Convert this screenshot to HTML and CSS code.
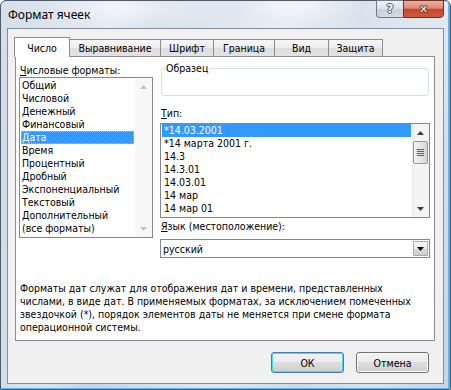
FILE: index.html
```html
<!DOCTYPE html>
<html lang="ru">
<head>
<meta charset="utf-8">
<title>Формат ячеек</title>
<link rel="stylesheet" href="styles.css">
</head>
<body>
<div class="window">
  <div class="titlebar">
    <span class="title">Формат ячеек</span>
    <div class="caption-btns">
      <div class="cbtn help">?</div>
      <div class="cbtn close">✕</div>
    </div>
  </div>
  <div class="client">
    <div class="tabs">
      <div class="tab active w-chislo">Число</div>
      <div class="tab w-vyr">Выравнивание</div>
      <div class="tab w-shrift">Шрифт</div>
      <div class="tab w-gran">Граница</div>
      <div class="tab w-vid">Вид</div>
      <div class="tab w-zash">Защита</div>
    </div>
    <div class="panel">
      <div class="top">
        <div class="leftcol">
          <div class="label"><u>Ч</u>исловые форматы:</div>
          <div class="listbox formats">
            <div class="items">
              <div class="item">Общий</div>
              <div class="item">Числовой</div>
              <div class="item">Денежный</div>
              <div class="item">Финансовый</div>
              <div class="item selected focused">Дата</div>
              <div class="item">Время</div>
              <div class="item">Процентный</div>
              <div class="item">Дробный</div>
              <div class="item">Экспоненциальный</div>
              <div class="item">Текстовый</div>
              <div class="item">Дополнительный</div>
              <div class="item">(все форматы)</div>
            </div>
            <div class="vscroll disabled">
              <div class="sbtn"><svg width="7" height="4" viewBox="0 0 7 4"><path d="M0 4 L3.5 0 L7 4 Z" fill="#c2c2c2"/></svg></div>
              <div class="track"></div>
              <div class="sbtn"><svg width="7" height="4" viewBox="0 0 7 4"><path d="M0 0 L7 0 L3.5 4 Z" fill="#c2c2c2"/></svg></div>
            </div>
          </div>
        </div>
        <div class="rightcol">
          <div class="group"><span class="group-label">Образец</span></div>
          <div class="label type-label"><u>Т</u>ип:</div>
          <div class="listbox types">
            <div class="items">
              <div class="item selected">*14.03.2001</div>
              <div class="item">*14 марта 2001 г.</div>
              <div class="item">14.3</div>
              <div class="item">14.3.01</div>
              <div class="item">14.03.01</div>
              <div class="item">14 мар</div>
              <div class="item">14 мар 01</div>
            </div>
            <div class="vscroll">
              <div class="sbtn"><svg width="7" height="4" viewBox="0 0 7 4"><path d="M0 4 L3.5 0 L7 4 Z" fill="#3c3c3c"/></svg></div>
              <div class="track"><div class="thumb"><span></span><span></span><span></span><span></span></div></div>
              <div class="sbtn"><svg width="7" height="4" viewBox="0 0 7 4"><path d="M0 0 L7 0 L3.5 4 Z" fill="#3c3c3c"/></svg></div>
            </div>
          </div>
          <div class="label lang-label"><u>Я</u>зык (местоположение):</div>
          <div class="combo">
            <span class="combo-text">русский</span>
            <div class="combo-btn"><svg width="7" height="4" viewBox="0 0 7 4"><path d="M0 0 L7 0 L3.5 4 Z" fill="#000"/></svg></div>
          </div>
        </div>
      </div>
      <p class="desc">Форматы дат служат для отображения дат и времени, представленных<br>числами, в виде дат. В применяемых форматах, за исключением помеченных<br>звездочкой (*), порядок элементов даты не меняется при смене формата<br>операционной системы.</p>
    </div>
    <div class="buttons">
      <div class="btn default">ОК</div>
      <div class="btn">Отмена</div>
    </div>
  </div>
</div>
</body>
</html>
```

FILE: styles.css
```css
* { box-sizing: border-box; }
html, body { margin: 0; padding: 0; background: #ffffff; }
body { width: 451px; height: 390px; overflow: hidden; }

.window {
  width: 451px;
  height: 390px;
  border: 1px solid #4d5b69;
  border-radius: 6px 6px 1px 1px;
  background:
    radial-gradient(ellipse 90px 22px at 130px 8px, rgba(255,255,255,0.55), rgba(255,255,255,0)),
    radial-gradient(ellipse 60px 18px at 300px 6px, rgba(255,255,255,0.45), rgba(255,255,255,0)),
    linear-gradient(100deg, rgba(255,255,255,0) 0%, rgba(255,255,255,0.35) 22%, rgba(255,255,255,0) 30%, rgba(255,255,255,0.45) 55%, rgba(255,255,255,0.1) 70%, rgba(255,255,255,0.3) 85%, rgba(255,255,255,0) 100%),
    linear-gradient(180deg, #d6e0ea 0%, #cbd8e6 40%, #c4d5e7 100%);
  box-shadow: inset -3px -2px 0 -1px #5fb4ee;
  font-family: "DejaVu Sans Condensed", "DejaVu Sans", sans-serif;
  font-size: 10.5px;
  color: #000;
}

.titlebar {
  height: 27px;
  display: flex;
  align-items: flex-start;
  padding-left: 7px;
}
.title {
  font-family: "Noto Sans", sans-serif;
  font-size: 12px;
  line-height: 16px;
  margin-top: 6px;
  color: #000;
}
.caption-btns {
  margin-left: auto;
  margin-right: 6px;
  margin-top: -1px;
  display: flex;
}
.cbtn {
  height: 18px;
  display: flex;
  align-items: center;
  justify-content: center;
  font-family: "DejaVu Sans", sans-serif;
  font-weight: bold;
  color: #fff;
}
.help {
  width: 27px;
  border: 1px solid #6e7c8b;
  border-right: none;
  border-radius: 0 0 0 4px;
  background: linear-gradient(180deg, #eef2f6 0%, #dbe3eb 48%, #c5d1dd 52%, #d2dce6 100%);
  font-size: 12px;
  color: #f4f6f8;
  text-shadow: 0 0 1px #3b4652, 1px 0 0 #5a6672, -1px 0 0 #5a6672, 0 1px 0 #5a6672, 0 -1px 0 #5a6672;
}
.close {
  width: 41px;
  border: 1px solid #6b3128;
  border-radius: 0 0 4px 0;
  background: linear-gradient(180deg, #eab0a2 0%, #dc8a75 45%, #c7462c 52%, #d2583c 100%);
  font-size: 11px;
  text-shadow: 0 0 1px #4a1c14, 1px 0 0 #6b3128, -1px 0 0 #6b3128, 0 1px 0 #6b3128, 0 -1px 0 #6b3128;
}

.client {
  margin-left: 6px;
  width: 437px;
  height: 356px;
  border: 1px solid #848e9a;
  background: #f0f0f0;
  display: flex;
  flex-direction: column;
}

.tabs {
  display: flex;
  align-items: flex-end;
  height: 20px;
  margin: 8px 0 -1px 6px;
  position: relative;
  z-index: 1;
}
.tab {
  height: 18px;
  border: 1px solid #898c95;
  margin-left: -1px;
  background: linear-gradient(180deg, #f7f7f7 0%, #ececec 50%, #dedede 51%, #e3e3e3 100%);
  text-align: center;
  line-height: 17px;
  white-space: nowrap;
}
.tab.active {
  height: 20px;
  margin-left: 0;
  border-bottom: none;
  background: #ffffff;
  position: relative;
  z-index: 2;
  line-height: 21px;
}
.w-chislo { width: 56px; }
.w-vyr { width: 92px; }
.w-shrift { width: 54px; }
.w-gran { width: 62px; }
.w-vid { width: 55px; }
.w-zash { width: 55px; }

.panel {
  margin-left: 7px;
  width: 420px;
  height: 285px;
  border: 1px solid #898c95;
  background: #ffffff;
  padding: 7px 0 0 3px;
}

.top { display: flex; gap: 7px; }
.leftcol { width: 134px; }
.rightcol { width: 270px; }

.label {
  height: 13px;
  line-height: 13px;
  padding-left: 1px;
  white-space: nowrap;
}
.label u { text-decoration: underline; text-underline-offset: 1px; }

.listbox {
  border: 1px solid #828790;
  background: #fff;
  display: flex;
}
.formats { height: 161px; }
.types { height: 95px; margin-top: 3px; }
.items { flex: 1; padding: 1px 1px 0 1px; }
.types .items { padding: 0 1px 0 1px; }
.item {
  height: 13px;
  line-height: 13px;
  padding-left: 1px;
  white-space: nowrap;
}
.types .item { padding-left: 2px; }
.item.selected { background: #3399ff; color: #fff; }
.item.focused { outline: 1px dotted #f6b25c; outline-offset: -1px; }

.vscroll {
  width: 17px;
  display: flex;
  flex-direction: column;
  background: linear-gradient(90deg, #e9e9e9 0%, #f5f5f5 20%, #f3f3f3 100%);
}
.vscroll.disabled { background: #f7f7f7; }
.sbtn {
  height: 17px;
  display: flex;
  align-items: center;
  justify-content: center;
}
.track { flex: 1; padding: 0 1px; }
.thumb {
  height: 23px;
  border: 1px solid #979797;
  border-radius: 2px;
  background: linear-gradient(90deg, #f2f2f2 0%, #e6e6e6 50%, #d6d6d6 100%);
  display: flex;
  flex-direction: column;
  align-items: center;
  justify-content: center;
  gap: 1px;
}
.thumb span { display: block; width: 7px; height: 1px; background: #5e5e5e; }

.group {
  position: relative;
  height: 28px;
  margin: 4px 1px 0 1px;
  border: 1px solid #d5dfe5;
  border-radius: 3px;
}
.group-label {
  position: absolute;
  top: -7px;
  left: 3px;
  line-height: 13px;
  background: #fff;
  padding: 0 1px;
}
.type-label { margin-top: 11px; }
.lang-label { margin-top: 2px; }

.combo {
  margin-top: 6px;
  height: 19px;
  border: 1px solid #828790;
  display: flex;
  align-items: center;
  padding: 0 1px 0 2px;
}
.combo-text { flex: 1; }
.combo-btn {
  width: 15px;
  height: 15px;
  border: 1px solid #a9a9a9;
  border-radius: 1px;
  background: linear-gradient(180deg, #f6f6f6 0%, #ebebeb 50%, #dcdcdc 51%, #cfcfcf 100%);
  display: flex;
  align-items: center;
  justify-content: center;
}

.desc {
  margin: 24px 0 0 1px;
  line-height: 13px;
  white-space: nowrap;
}

.buttons {
  display: flex;
  justify-content: flex-end;
  gap: 12px;
  margin-top: 11px;
  padding-right: 14px;
}
.btn {
  width: 73px;
  height: 21px;
  border: 1px solid #707070;
  border-radius: 3px;
  background: linear-gradient(180deg, #f2f2f2 0%, #ebebeb 49%, #dddddd 50%, #cfcfcf 100%);
  display: flex;
  align-items: center;
  justify-content: center;
  box-shadow: inset 0 0 0 1px #fcfcfc;
}
.btn.default {
  border-color: #3c7fb1;
  box-shadow: inset 0 0 0 1px #48d8fb;
}
```
